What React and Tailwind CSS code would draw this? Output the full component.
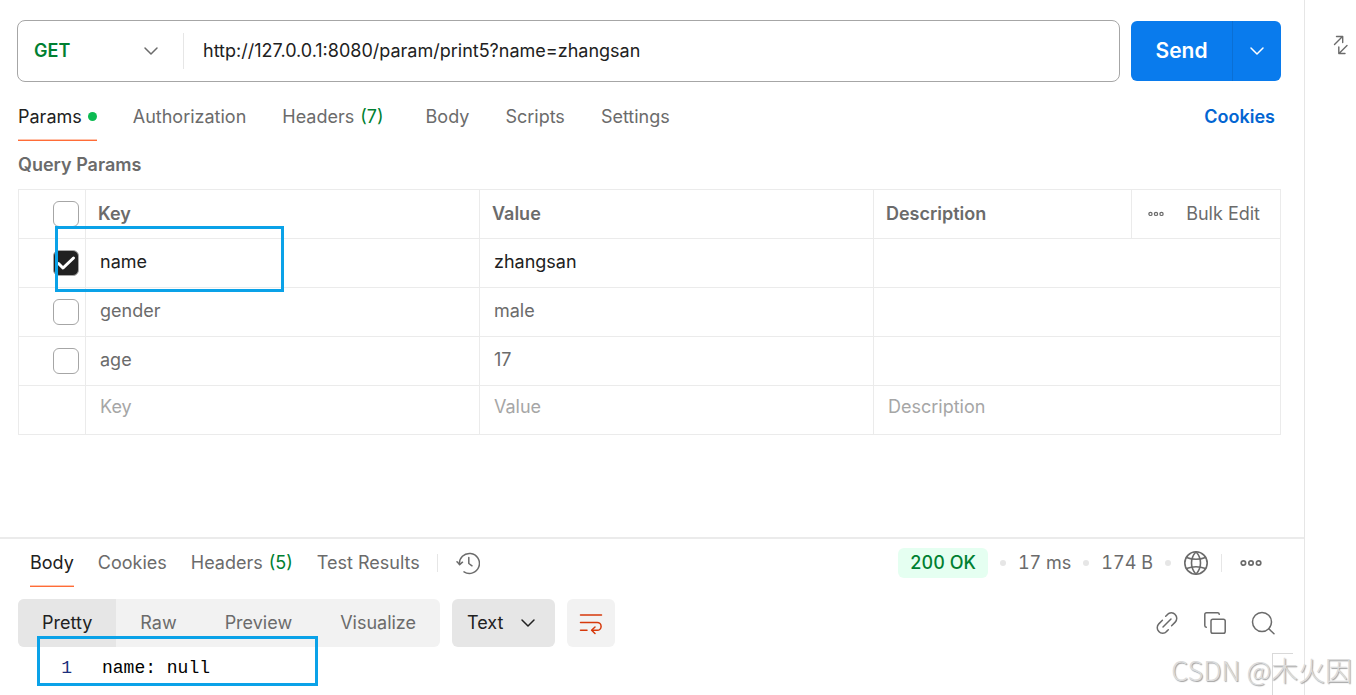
import React, { useState } from "react";

const stroke = {
  fill: "none",
  stroke: "currentColor",
  strokeLinecap: "round",
  strokeLinejoin: "round",
};

function Chevron({ className = "" }) {
  return (
    <svg className={className} width="16" height="16" viewBox="0 0 16 16" aria-hidden="true" {...stroke} strokeWidth="1.5">
      <path d="M2 5l6 6 6-6" />
    </svg>
  );
}

function Dots({ width }) {
  return (
    <svg width={width} height={(width * 8) / 22} viewBox="0 0 22 8" aria-hidden="true" {...stroke} strokeWidth="1.7">
      <circle cx="3.4" cy="4" r="2.2" />
      <circle cx="11" cy="4" r="2.2" />
      <circle cx="18.6" cy="4" r="2.2" />
    </svg>
  );
}

function HistoryIcon() {
  return (
    <svg width="24" height="24" viewBox="0 0 24 24" aria-hidden="true" {...stroke} strokeWidth="1.5">
      <path d="M3.500 13.500A10 10 0 1 1 8 20.800" />
      <path d="M1 10.800l2.600 2.800 2.900-2.400" />
      <path d="M12.800 6.500v6l3.200 2.300" />
    </svg>
  );
}

function GlobeIcon() {
  return (
    <svg width="26" height="26" viewBox="0 0 26 26" aria-hidden="true" {...stroke} strokeWidth="1.6">
      <circle cx="13" cy="13" r="11.200" />
      <path d="M13 1.800c-6 6.500-6 16 0 22.400M13 1.800c6 6.500 6 16 0 22.400" />
      <path d="M3.500 7.500c6 2.300 13 2.300 19 0M3.500 18.500c6-2.300 13-2.300 19 0" />
    </svg>
  );
}

function WrapIcon() {
  return (
    <svg width="24" height="24" viewBox="0 0 24 24" aria-hidden="true" {...stroke} strokeWidth="1.5">
      <path d="M1.500 4h21" />
      <path d="M1.500 11.500h16.700a3.900 3.900 0 0 1 0 7.800h-5" />
      <path d="M16 16l-3.400 3.300L16 22.500" />
      <path d="M1.500 19.300h6.500" />
    </svg>
  );
}

function LinkIcon() {
  return (
    <svg width="24" height="24" viewBox="0 0 24 24" aria-hidden="true" {...stroke} strokeWidth="1.5">
      <path d="M10.700 5.200l1.700-1.600a5.200 5.200 0 0 1 7.800 0 5.300 5.300 0 0 1 0 7.500l-3.600 3.700" />
      <path d="M13.300 18.800l-1.700 1.600a5.200 5.200 0 0 1-7.800 0 5.300 5.300 0 0 1 0-7.500l3.600-3.700" />
      <path d="M8 16l8-8" />
    </svg>
  );
}

function CopyIcon() {
  return (
    <svg width="24" height="24" viewBox="0 0 24 24" aria-hidden="true" {...stroke} strokeWidth="1.5">
      <path d="M3.300 16.200a1.700 1.700 0 0 1-1.500-1.700V3.500a1.800 1.800 0 0 1 1.800-1.800h11a1.800 1.800 0 0 1 1.700 1.600" />
      <rect x="8" y="8.200" width="14.200" height="14" rx="1.800" />
    </svg>
  );
}

function SearchIcon() {
  return (
    <svg width="24" height="24" viewBox="0 0 24 24" aria-hidden="true" {...stroke} strokeWidth="1.5">
      <circle cx="11" cy="11" r="9.500" />
      <path d="M17.800 17.800l5.200 5.000" />
    </svg>
  );
}

function ExpandIcon() {
  return (
    <svg width="16" height="20" viewBox="0 0 16 20" aria-hidden="true" {...stroke} strokeWidth="1.4">
      <path d="M1.500 9.500l8-8M3.500 1.500h6.200v6" />
      <path d="M14 10.500l-8 8M5.800 12v6.500H12" />
    </svg>
  );
}

function Tab({ active, dot, count, className = "", children }) {
  return (
    <button type="button" role="tab" aria-selected={!!active} className={`flex flex-col ${className}`}>
      <span className={`flex flex-1 items-center gap-1.5 ${active ? "text-[#212121]" : "text-[#6b6b6b]"}`}>
        {children}
        {count && <span className="text-[#007f31]">({count})</span>}
        {dot && <span className="size-[9px] rounded-full bg-[#0cbb52]" />}
      </span>
      {active ? <span className="h-0.5 w-full border-t border-[#ffc2ab] bg-[#ff6c37]" /> : <span className="h-0.5" />}
    </button>
  );
}

function Check({ label, checked, onChange }) {
  return (
    <span className="relative ml-auto mr-1.5 block size-[26px]">
      <input
        type="checkbox"
        aria-label={label}
        checked={checked}
        onChange={onChange}
        className="peer block size-[26px] appearance-none rounded-md border border-[#a6a6a6] bg-white checked:bg-[#212121]"
      />
      <svg className="pointer-events-none absolute inset-0 hidden text-white peer-checked:block" width="26" height="26" viewBox="0 0 26 26" aria-hidden="true" {...stroke} strokeWidth="3">
        <path d="M5.500 13.500l4.500 4.500L20.500 8" />
      </svg>
    </span>
  );
}

const cell = "h-[49px] border border-[#ebebeb] p-0";
const field = "block w-full bg-transparent px-3.5 outline-none placeholder:text-[#a6a6a6]";

const initialRows = [
  { key: "name", value: "zhangsan", on: true },
  { key: "gender", value: "male", on: false },
  { key: "age", value: "17", on: false },
];

function ParamsTable() {
  const [rows, setRows] = useState(initialRows);
  const [all, setAll] = useState(false);
  const update = (i, patch) => setRows(rows.map((r, n) => (n === i ? { ...r, ...patch } : r)));

  return (
    <div className="relative">
      <table className="w-full table-fixed border-collapse text-left">
        <colgroup>
          <col className="w-[67px]" />
          <col className="w-[31.22%]" />
          <col className="w-[31.22%]" />
          <col />
          <col className="w-[149px]" />
        </colgroup>
        <thead className="text-[#6b6b6b]">
          <tr>
            <td className={cell}>
              <Check label="Select all" checked={all} onChange={() => setAll(!all)} />
            </td>
            <th className={`${cell} font-semibold`}><span className="px-3">Key</span></th>
            <th className={`${cell} font-semibold`}><span className="px-3">Value</span></th>
            <th className={`${cell} font-semibold`}><span className="px-3">Description</span></th>
            <td className={cell}>
              <div className="flex items-center justify-between pl-4 pr-5">
                <button type="button" aria-label="More columns"><Dots width={16} /></button>
                <button type="button">Bulk Edit</button>
              </div>
            </td>
          </tr>
        </thead>
        <tbody>
          {rows.map((r, i) => (
            <tr key={i} className={r.on ? "text-[#212121]" : "text-[#6b6b6b]"}>
              <td className={cell}>
                <Check label={`Enable parameter ${i + 1}`} checked={r.on} onChange={() => update(i, { on: !r.on })} />
              </td>
              <td className={`${cell} pb-0.5`}>
                <input aria-label="Key" className={field} value={r.key} onChange={(e) => update(i, { key: e.target.value })} />
              </td>
              <td className={`${cell} pb-0.5`}>
                <input aria-label="Value" className={field} value={r.value} onChange={(e) => update(i, { value: e.target.value })} />
              </td>
              <td className={`${cell} pb-0.5`} colSpan={2}>
                <input aria-label="Description" className={field} />
              </td>
            </tr>
          ))}
          <tr>
            <td className={cell} />
            <td className={`${cell} pb-1.5`}><input aria-label="New key" placeholder="Key" className={field} /></td>
            <td className={`${cell} pb-1.5`}><input aria-label="New value" placeholder="Value" className={field} /></td>
            <td className={`${cell} pb-1.5`} colSpan={2}><input aria-label="New description" placeholder="Description" className={field} /></td>
          </tr>
        </tbody>
      </table>
      <div className="pointer-events-none absolute left-[37px] top-[37px] h-[66px] w-[229px] border-[3px] border-[#0aa2e8]" />
    </div>
  );
}

function Request() {
  return (
    <section className="pb-[102px] pl-[18px] pr-[23px] pt-5">
      <form className="-ml-px flex items-center gap-[11px]" onSubmit={(e) => e.preventDefault()}>
        <div className="flex h-[62px] flex-1 items-center rounded-lg border border-[#a6a6a6]">
          <div className="relative flex h-9 w-[166px] items-center border-r border-[#e6e6e6]">
            <select aria-label="Method" className="w-full appearance-none bg-transparent pl-4 font-semibold text-[#007f31] outline-none">
              <option>GET</option>
              <option>POST</option>
            </select>
            <Chevron className="pointer-events-none absolute right-6 text-[#6b6b6b]" />
          </div>
          <input
            aria-label="Request URL"
            className="flex-1 bg-transparent px-[19px] text-[#212121] outline-none"
            defaultValue="http://127.0.0.1:8080/param/print5?name=zhangsan"
          />
        </div>
        <div className="flex h-[60px] overflow-hidden rounded-md bg-[#097bed] text-white">
          <button type="submit" className="w-[101px] text-[21px] font-semibold">Send</button>
          <button type="button" aria-label="Send options" className="flex w-[49px] items-center justify-center border-l border-[#0a6fd4]">
            <Chevron />
          </button>
        </div>
      </form>

      <div className="mt-3 flex h-[47px] justify-between">
        <div role="tablist" className="flex gap-9">
          <Tab active dot>Params</Tab>
          <Tab>Authorization</Tab>
          <Tab count={7} className="pr-1.5">Headers</Tab>
          <Tab>Body</Tab>
          <Tab>Scripts</Tab>
          <Tab>Settings</Tab>
        </div>
        <a href="#cookies" className="mr-1.5 flex items-center pb-0.5 font-semibold text-[#0265d2]">Cookies</a>
      </div>

      <h2 className="flex h-12 items-center font-semibold text-[#6b6b6b]">Query Params</h2>
      <ParamsTable />
    </section>
  );
}

function Response() {
  return (
    <section className="relative flex-1 border-t-2 border-[#ebebeb] text-[#6b6b6b]">
      <div className="flex h-12 justify-between pl-[30px] pr-[42px]">
        <div className="flex">
          <div role="tablist" className="flex gap-6 pt-0.5">
            <Tab active>Body</Tab>
            <Tab>Cookies</Tab>
            <Tab count={5}>Headers</Tab>
            <Tab>Test Results</Tab>
          </div>
          <div className="ml-[17px] flex items-center">
            <span className="h-[18px] w-px bg-[#e6e6e6]" />
            <button type="button" aria-label="History" className="ml-[18px]"><HistoryIcon /></button>
          </div>
        </div>
        <div className="flex items-center gap-3 tabular-nums">
          <span className="flex h-[30px] items-center rounded-md bg-[#e5fff1] px-3 font-medium text-[#007f31]">200 OK</span>
          <span className="size-1.5 rounded-full bg-[#e6e6e6]" />
          <span>17 ms</span>
          <span className="size-1.5 rounded-full bg-[#e6e6e6]" />
          <span>174 B</span>
          <span className="size-1.5 rounded-full bg-[#e6e6e6]" />
          <button type="button" aria-label="Network"><GlobeIcon /></button>
          <span className="h-[18px] w-px bg-[#e6e6e6]" />
          <button type="button" aria-label="More actions" className="ml-1.5"><Dots width={22} /></button>
        </div>
      </div>

      <div className="mt-3 flex h-12 items-stretch justify-between pl-[18px] pr-[29px]">
        <div className="flex gap-3">
          <div className="flex overflow-hidden rounded-md bg-[#f2f2f2]">
            <button type="button" className="bg-[#e6e6e6] px-6 text-[#212121]">Pretty</button>
            <button type="button" className="px-6">Raw</button>
            <button type="button" className="px-6">Preview</button>
            <button type="button" className="px-6">Visualize</button>
          </div>
          <div className="relative flex w-[103px] items-center rounded-md bg-[#e6e6e6] text-[#212121]">
            <select aria-label="Format" className="h-full w-full appearance-none bg-transparent pl-[15px] outline-none">
              <option>Text</option>
              <option>JSON</option>
            </select>
            <Chevron className="pointer-events-none absolute right-[19px]" />
          </div>
          <button type="button" aria-label="Wrap lines" className="flex w-12 items-center justify-center rounded-md bg-[#f2f2f2] text-[#d6390b]">
            <WrapIcon />
          </button>
        </div>
        <div className="flex items-center gap-6">
          <button type="button" aria-label="Copy link"><LinkIcon /></button>
          <button type="button" aria-label="Copy"><CopyIcon /></button>
          <button type="button" aria-label="Search"><SearchIcon /></button>
        </div>
      </div>

      <pre className="mt-[9px] flex font-['Liberation_Mono',monospace] text-[18px] leading-6 text-black">
        <span className="w-[72px] text-right text-[#1c2f7c]">1</span>
        <code className="pl-[30px] font-['Liberation_Mono',monospace]">name: null</code>
      </pre>
      <div className="pointer-events-none absolute left-[37px] top-[97px] h-[50px] w-[281px] border-[3px] border-[#0aa2e8]" />
      <div className="absolute bottom-0 right-[11px] h-[42px] w-[21px] border-l border-t border-[#d9d9d9]" />
    </section>
  );
}

export default function App() {
  return (
    <div className="relative flex min-h-screen bg-white font-['Inter','Noto_Sans_CJK_SC',sans-serif] text-[18px] leading-6">
      <main className="flex min-w-0 flex-1 flex-col">
        <Request />
        <Response />
      </main>
      <aside className="w-[52px] border-l border-[#e6e6e6] pl-7 pt-[35px] text-[#6b6b6b]">
        <button type="button" aria-label="Expand pane"><ExpandIcon /></button>
      </aside>
      <div className="pointer-events-none absolute bottom-[7px] right-1 whitespace-nowrap font-['Noto_Sans_CJK_SC',sans-serif] text-[27px] font-light leading-9 text-[#dcdcdc] [text-shadow:1px_1px_1px_#9f9f9f]">
        CSDN @木火因
      </div>
    </div>
  );
}
